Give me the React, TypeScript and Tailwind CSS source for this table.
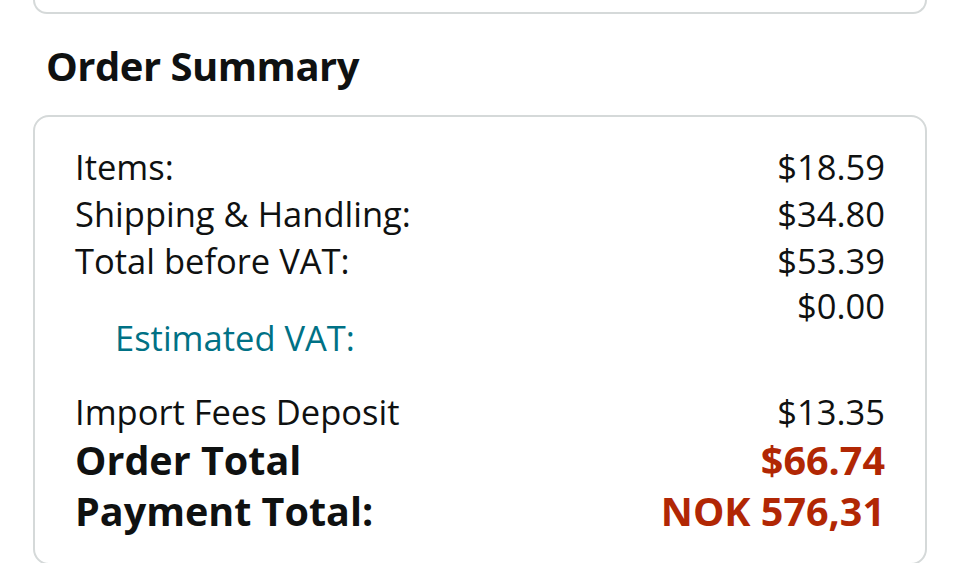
const rows = [
  { label: 'Items:', value: '$18.59' },
  { label: 'Shipping & Handling:', value: '$34.80' },
  { label: 'Total before VAT:', value: '$53.39' },
]

export default function App() {
  return (
    <div className="w-[960px] h-[563px] overflow-hidden bg-white text-[#0f1111] font-['Open_Sans',sans-serif]">
      <div className="mx-[33px] h-[14px] border-2 border-t-0 border-[#d5d9d9] rounded-b-[16px]" />
      <h2 className="pl-[46px] pt-[26px] text-[40px] leading-[52px] font-bold tracking-[-0.5px]">Order Summary</h2>
      <div className="mt-[23px] ml-[33px] w-[894px] h-[450px] border-2 border-[#d5d9d9] rounded-[16px] pl-[40px] pr-[40px] pt-[26px] text-[34.5px]">
        {rows.map(r => (
          <div key={r.label} className="flex justify-between h-[47px] leading-[47px]">
            <span>{r.label}</span>
            <span>{r.value}</span>
          </div>
        ))}
        <div className="flex justify-between h-[104px]">
          <span className="pl-[40px] pt-[30px] leading-[47px] text-[#007185]">Estimated VAT:</span>
          <span className="leading-[47px] -mt-[2px]">$0.00</span>
        </div>
        <div className="flex justify-between h-[47px] leading-[47px]">
          <span>Import Fees Deposit</span>
          <span>$13.35</span>
        </div>
        <div className="flex justify-between h-[50px] leading-[50px] text-[39.5px] font-bold">
          <span>Order Total</span>
          <span className="text-[#b12704]">$66.74</span>
        </div>
        <div className="flex justify-between h-[52px] leading-[52px] text-[39.5px] font-bold">
          <span>Payment Total:</span>
          <span className="text-[#b12704]">NOK 576,31</span>
        </div>
      </div>
    </div>
  )
}
